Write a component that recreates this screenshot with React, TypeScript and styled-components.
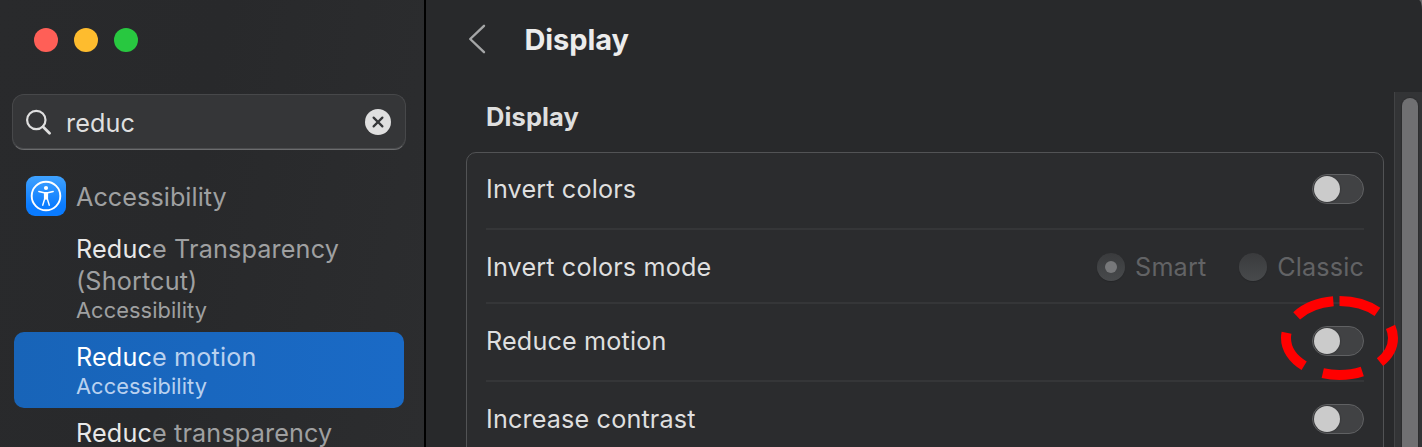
import React from 'react';
import styled, { createGlobalStyle } from 'styled-components';

const Global = createGlobalStyle`
  * { box-sizing: border-box; }
  body { margin: 0; background: #6a6b6d; overflow: hidden; }
`;

const Window = styled.div`
  display: flex;
  width: 1422px;
  height: 447px;
  overflow: hidden;
  position: relative;
  border-top-right-radius: 3px 10px;
  background: #28292b;
  color: #dfdfdf;
  font-family: Inter, "Liberation Sans", sans-serif;
  font-size: 25.2px;
  font-weight: 440;
  letter-spacing: 0.15px;
`;

const Sidebar = styled.aside`
  width: 426px;
  flex: none;
  border-right: 2px solid #000;
  background: linear-gradient(100deg, #292a2c 0%, #28292b 45%, #2c2d2f 100%);
`;

const Lights = styled.div`
  display: flex;
  gap: 16px;
  padding: 28px 0 0 34px;
`;

const Light = styled.span<{ $color: string }>`
  width: 24px;
  height: 24px;
  border-radius: 50%;
  background: ${(p) => p.$color};
`;

const SearchField = styled.div`
  display: flex;
  align-items: center;
  width: 394px;
  height: 56px;
  margin: 42px 0 0 12px;
  padding: 0 14px 0 12px;
  border: 1px solid #47484a;
  border-bottom-color: #6b6c6e;
  border-radius: 12px;
  background: #353638;
  box-shadow: inset 0 -1px 0 #4a4b4d;
`;

const Query = styled.span`
  flex: 1;
  margin-left: 15px;
  padding-top: 1px;
  letter-spacing: 0.1px;
`;

const Text = styled.span`
  white-space: nowrap;
`;

const Category = styled.div`
  display: flex;
  align-items: center;
  gap: 10px;
  height: 40px;
  margin: 26px 0 8px 26px;
  color: #9fa0a1;
  ${Text} { padding-top: 2px; letter-spacing: 0.05px; }
`;

const Result = styled.div<{ $selected?: boolean }>`
  margin: 0 20px 0 14px;
  padding: 9px 0 8px 62px;
  border-radius: 10px;
  line-height: 32px;
  color: ${(p) => (p.$selected ? '#b9d1ef' : '#9fa0a1')};
  background: ${(p) => (p.$selected ? 'linear-gradient(90deg, #1864b8, #1a6ac6)' : 'none')};
`;

const Match = styled.b<{ $selected?: boolean }>`
  font-weight: inherit;
  color: ${(p) => (p.$selected ? '#fff' : '#e8e8e8')};
`;

const Line = styled.div`
  white-space: nowrap;
`;

const Source = styled.div`
  font-size: 21.8px;
  line-height: 27px;
  letter-spacing: 0.08px;
`;

const Main = styled.main`
  flex: 1;
  display: flex;
  flex-direction: column;
`;

const Toolbar = styled.header`
  display: flex;
  flex: none;
  align-items: center;
  height: 92px;
  padding: 0 0 14px 41px;
`;

const Title = styled.h1`
  margin: 0 0 0 37.5px;
  font-size: 29px;
  font-weight: 700;
  letter-spacing: -0.1px;
  color: #ececec;
`;

const Body = styled.div`
  display: flex;
  flex: 1;
  min-height: 0;
`;

const Content = styled.section`
  width: 968px;
  flex: none;
  padding-left: 40px;
`;

const SectionTitle = styled.h2`
  margin: 0;
  height: 60px;
  padding-left: 20px;
  font-size: 25.5px;
  line-height: 50px;
  font-weight: 680;
  letter-spacing: 0.1px;
`;

const Card = styled.div`
  width: 918px;
  height: 330px;
  padding: 0 19px;
  border: 1px solid #525355;
  border-radius: 10px;
  background: #2b2c2e;
`;

const Row = styled.div<{ $h: number; $pt?: number; $pb?: number; $last?: boolean }>`
  display: flex;
  align-items: center;
  justify-content: space-between;
  height: ${(p) => p.$h}px;
  padding-top: ${(p) => p.$pt ?? 0}px;
  padding-bottom: ${(p) => p.$pb ?? 0}px;
  border-bottom: ${(p) => (p.$last ? 0 : 2)}px solid #353638;
`;

const Switch = styled.span`
  display: flex;
  align-items: center;
  width: 52px;
  height: 30px;
  padding-left: 1px;
  border: 1px solid #606163;
  border-radius: 15px;
  background: #414244;
  &::after {
    content: '';
    width: 26px;
    height: 26px;
    border-radius: 50%;
    background: #cbcbcb;
    box-shadow: 0 0 2px rgba(0, 0, 0, 0.4);
  }
`;

const Options = styled.div`
  display: flex;
  gap: 33px;
  color: #626365;
`;

const Option = styled.div`
  display: flex;
  align-items: center;
  gap: 10px;
  letter-spacing: 0.14px;
`;

const Radio = styled.span<{ $on?: boolean }>`
  display: grid;
  place-items: center;
  width: 28px;
  height: 28px;
  border-radius: 50%;
  background: linear-gradient(#3a3b3d, #484a4c);
  box-shadow: 0 1px 1px rgba(0, 0, 0, 0.15);
  &::after {
    content: '';
    width: 12px;
    height: 12px;
    border-radius: 50%;
    background: ${(p) => (p.$on ? '#77787a' : 'transparent')};
  }
`;

const Track = styled.div`
  flex: 1;
  padding: 6px 0 0 7px;
  border-left: 1px solid #424345;
  background: #333436;
`;

const Thumb = styled.div`
  width: 16px;
  height: 400px;
  border-radius: 8px;
  background: #707072;
  box-shadow: 0 0 1px 1px rgba(0, 0, 0, 0.15);
`;

const Highlight = styled.svg`
  position: absolute;
  left: 1275px;
  top: 290px;
`;

export default function App() {
  return (
    <>
      <Global />
      <Window>
        <Sidebar>
          <Lights>
            <Light $color="#ff5f57" />
            <Light $color="#febc2e" />
            <Light $color="#28c840" />
          </Lights>
          <SearchField>
            <svg width="26" height="26" viewBox="0 0 26 26" fill="none" stroke="#dfdfdf" strokeWidth="2.2" strokeLinecap="round">
              <circle cx="11.3" cy="11" r="9.2" />
              <path d="M18 17.7L24.5 24.2" strokeWidth="2.8" />
            </svg>
            <Query>reduc</Query>
            <svg width="26" height="26" viewBox="0 0 26 26">
              <circle cx="13" cy="13" r="13" fill="#dfdfdf" />
              <path d="M8.6 8.6l8.8 8.8M17.4 8.6l-8.8 8.8" stroke="#353638" strokeWidth="2.2" strokeLinecap="round" />
            </svg>
          </SearchField>
          <Category>
            <svg width="40" height="40" viewBox="0 0 40 40">
              <defs>
                <linearGradient id="tile" x1="0" y1="0" x2="0" y2="1">
                  <stop offset="0" stopColor="#3fa2ff" />
                  <stop offset="0.75" stopColor="#0a7bff" />
                </linearGradient>
              </defs>
              <rect width="40" height="40" rx="9" fill="url(#tile)" />
              <circle cx="20" cy="20" r="14.3" fill="none" stroke="#fff" strokeWidth="1.9" />
              <circle cx="20" cy="12" r="2.1" fill="#fff" />
              <path d="M12.8 15.5l5.4 1.2h3.6l5.4-1.2M18.6 17v6l-1.9 6.2M21.4 17v6l1.9 6.2" fill="none" stroke="#fff" strokeWidth="1.4" strokeLinecap="round" strokeLinejoin="round" />
              <path d="M18 16.4h4v7.2h-4z" fill="#fff" />
            </svg>
            <Text>Accessibility</Text>
          </Category>
          <Result>
            <Line><Match>Reduc</Match>e Transparency</Line>
            <Line>(Shortcut)</Line>
            <Source>Accessibility</Source>
          </Result>
          <Result $selected>
            <Line><Match $selected>Reduc</Match>e motion</Line>
            <Source>Accessibility</Source>
          </Result>
          <Result>
            <Line><Match>Reduc</Match>e transparency</Line>
          </Result>
        </Sidebar>
        <Main>
          <Toolbar>
            <svg width="20" height="30" viewBox="0 0 20 30" fill="none" stroke="#a5a6a7" strokeWidth="2.4" strokeLinecap="round" strokeLinejoin="round">
              <path d="M17 1.8L3.2 15 17 28.2" />
            </svg>
            <Title>Display</Title>
          </Toolbar>
          <Body>
            <Content>
              <SectionTitle>Display</SectionTitle>
              <Card>
                <Row $h={77} $pb={4}><Text>Invert colors</Text><Switch /></Row>
                <Row $h={74} $pt={2}>
                  <Text>Invert colors mode</Text>
                  <Options>
                    <Option><Radio $on /><Text>Smart</Text></Option>
                    <Option><Radio /><Text>Classic</Text></Option>
                  </Options>
                </Row>
                <Row $h={78} $pb={2}><Text>Reduce motion</Text><Switch /></Row>
                <Row $h={74} $last><Text>Increase contrast</Text><Switch /></Row>
              </Card>
            </Content>
            <Track><Thumb /></Track>
          </Body>
        </Main>
        <Highlight width="130" height="95" viewBox="0 0 130 95">
          <path d="M64.5 11a53.5 37 0 0 1 0 74a53.5 37 0 0 1 0 -74" fill="none" stroke="#f00" strokeWidth="10" strokeDasharray="40 20" />
        </Highlight>
      </Window>
    </>
  );
}
